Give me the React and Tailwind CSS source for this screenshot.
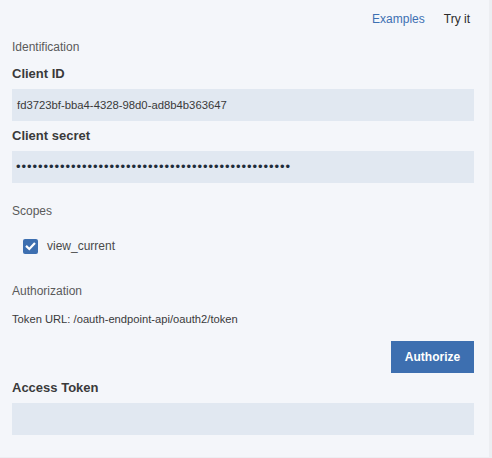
import React from "react";

export default function App() {
  const dots = "•".repeat(50);
  return (
    <div
      className="w-[492px] h-[458px] bg-[#eceef2] overflow-hidden"
      style={{ fontFamily: '"Liberation Sans", Arial, sans-serif' }}
    >
      <div className="w-[489px] h-[457px] bg-[#f4f6fa] pl-[12px] pr-[15px] flex flex-col">
        <div className="flex justify-end gap-[19px] pr-[4px] pt-[11px] text-[12px] leading-[16px]">
          <span className="text-[#3d70b2]">Examples</span>
          <span className="text-[#2b2b2b]">Try it</span>
        </div>

        <div className="mt-[12px] text-[12px] leading-[16px] text-[#5a5a5a]">Identification</div>

        <div className="mt-[11px] text-[13px] leading-[16px] font-bold text-[#3a3a3a]">Client ID</div>
        <div className="mt-[7px] h-[32px] bg-[#e1e8f1] flex items-center pl-[5px] text-[11.3px] text-[#3a3a3a]">
          fd3723bf-bba4-4328-98d0-ad8b4b363647
        </div>

        <div className="mt-[7px] text-[13px] leading-[16px] font-bold text-[#3a3a3a]">Client secret</div>
        <div className="mt-[7px] h-[32px] bg-[#e1e8f1] flex items-center pl-[4px] text-[13px] tracking-[0.95px] text-[#1f2d3a]">
          {dots}
        </div>

        <div className="mt-[20px] text-[12px] leading-[16px] text-[#5a5a5a]">Scopes</div>

        <div className="mt-[19px] flex items-center pl-[11px] h-[16px]">
          <div className="w-[15px] h-[15px] rounded-[2px] bg-[#3d6fb0] flex items-center justify-center">
            <svg width="11" height="11" viewBox="0 0 11 11">
              <path d="M1.8 5.6 L4.3 8 L9.2 2.8" fill="none" stroke="white" strokeWidth="2.2" strokeLinecap="square" />
            </svg>
          </div>
          <span className="ml-[9px] text-[12px] leading-[16px] text-[#4a4a4a]">view_current</span>
        </div>

        <div className="mt-[29px] text-[12px] leading-[16px] text-[#5a5a5a]">Authorization</div>
        <div className="mt-[12px] text-[11.2px] leading-[16px] text-[#3a3a3a]">
          Token URL: /oauth-endpoint-api/oauth2/token
        </div>

        <div className="mt-[14px] flex justify-end">
          <div className="w-[83px] h-[32px] bg-[#3d6fb0] text-white font-bold text-[12px] flex items-center justify-center">
            Authorize
          </div>
        </div>

        <div className="mt-[7px] text-[13px] leading-[16px] font-bold text-[#3a3a3a]">Access Token</div>
        <div className="mt-[7px] h-[32px] bg-[#e1e8f1]" />
      </div>
    </div>
  );
}
